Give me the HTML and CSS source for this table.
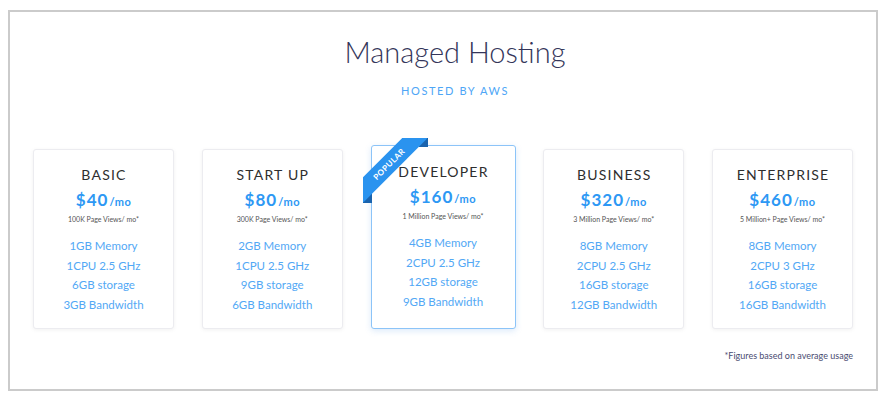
FILE: index.html
```html
<!DOCTYPE html>
<html>
<head>
<meta charset="utf-8">
<link rel="stylesheet" href="styles.css">
</head>
<body>
<div class="frame">
  <h1 class="title">Managed Hosting</h1>
  <div class="subtitle">HOSTED BY AWS</div>
  <div class="plans">
    <div class="card">
      <div class="name">BASIC</div>
      <div class="price">$40<span class="per">/mo</span></div>
      <div class="views">100K Page Views/ mo*</div>
      <ul class="features">
        <li>1GB Memory</li>
        <li>1CPU 2.5 GHz</li>
        <li>6GB storage</li>
        <li>3GB Bandwidth</li>
      </ul>
    </div>
    <div class="card">
      <div class="name">START UP</div>
      <div class="price">$80<span class="per">/mo</span></div>
      <div class="views">300K Page Views/ mo*</div>
      <ul class="features">
        <li>2GB Memory</li>
        <li>1CPU 2.5 GHz</li>
        <li>9GB storage</li>
        <li>6GB Bandwidth</li>
      </ul>
    </div>
    <div class="card card-popular">
      <div class="ribbon">
        <span class="fold fold-left"></span>
        <span class="fold fold-top"></span>
        <span class="band">POPULAR</span>
      </div>
      <div class="name">DEVELOPER</div>
      <div class="price">$160<span class="per">/mo</span></div>
      <div class="views">1 Million Page Views/ mo*</div>
      <ul class="features">
        <li>4GB Memory</li>
        <li>2CPU 2.5 GHz</li>
        <li>12GB storage</li>
        <li>9GB Bandwidth</li>
      </ul>
    </div>
    <div class="card">
      <div class="name">BUSINESS</div>
      <div class="price">$320<span class="per">/mo</span></div>
      <div class="views">3 Million Page Views/ mo*</div>
      <ul class="features">
        <li>8GB Memory</li>
        <li>2CPU 2.5 GHz</li>
        <li>16GB storage</li>
        <li>12GB Bandwidth</li>
      </ul>
    </div>
    <div class="card">
      <div class="name">ENTERPRISE</div>
      <div class="price">$460<span class="per">/mo</span></div>
      <div class="views">5 Million+ Page Views/ mo*</div>
      <ul class="features">
        <li>8GB Memory</li>
        <li>2CPU 3 GHz</li>
        <li>16GB storage</li>
        <li>16GB Bandwidth</li>
      </ul>
    </div>
  </div>
  <div class="note">*Figures based on average usage</div>
</div>
</body>
</html>
```

FILE: styles.css
```css
html, body {
  margin: 0;
  padding: 0;
  background: #ffffff;
}
body {
  padding: 10px 10px 9px 8px;
  font-family: Lato, "Open Sans", sans-serif;
}
.frame {
  box-sizing: border-box;
  width: 870px;
  height: 381px;
  border: 2px solid #cbcbcb;
  padding-top: 22px;
  display: flex;
  flex-direction: column;
  align-items: center;
}
.title {
  margin: 0;
  padding-left: 24px;
  font-size: 29px;
  line-height: 36px;
  font-weight: 300;
  color: #34365a;
}
.subtitle {
  margin-top: 14px;
  padding-left: 24px;
  font-size: 11px;
  line-height: 14px;
  letter-spacing: 1.6px;
  color: #4ea6f6;
}
.plans {
  margin-top: 47px;
  width: 820px;
  display: flex;
  justify-content: space-between;
  align-items: flex-end;
}
.card {
  box-sizing: border-box;
  position: relative;
  width: 141px;
  height: 180px;
  background: #fff;
  border: 1px solid #ececf0;
  border-radius: 3px;
  box-shadow: 0 1px 4px rgba(0, 0, 0, 0.06);
  padding-top: 16px;
  display: flex;
  flex-direction: column;
  align-items: center;
  text-align: center;
}
.card-popular {
  width: 145px;
  height: 184px;
  padding-top: 17px;
  border: 1px solid #8cc4f8;
  box-shadow: 0 2px 6px rgba(60, 140, 230, 0.18);
}
.name {
  font-size: 14px;
  line-height: 18px;
  letter-spacing: 1.2px;
  color: #2e2e2e;
  padding-left: 1px;
}
.price {
  margin-top: 5px;
  font-size: 17px;
  line-height: 22px;
  font-weight: 700;
  letter-spacing: 1px;
  color: #2d98f4;
}
.per {
  font-size: 11px;
  letter-spacing: 0.5px;
  margin-left: 1px;
}
.views {
  margin-top: 1px;
  font-size: 7px;
  line-height: 10px;
  color: #555;
}
.features {
  list-style: none;
  margin: 12px 0 0;
  padding: 0;
  font-size: 11.5px;
  line-height: 19.5px;
  color: #52a8f5;
}
.ribbon {
  position: absolute;
  left: -9px;
  top: -8px;
  width: 70px;
  height: 70px;
  overflow: hidden;
  pointer-events: none;
}
.band {
  position: absolute;
  left: -19px;
  top: 17px;
  width: 90px;
  height: 18px;
  line-height: 18px;
  background: #2a93ef;
  color: #fff;
  font-size: 8px;
  font-weight: 700;
  letter-spacing: 0.5px;
  text-align: center;
  transform: rotate(-45deg);
  z-index: 2;
}
.fold {
  position: absolute;
  width: 9px;
  height: 9px;
  background: #1a63ad;
  z-index: 1;
}
.fold-left {
  left: 0;
  top: 56px;
}
.fold-top {
  left: 56px;
  top: 0;
}
.note {
  width: 820px;
  margin-top: 21px;
  text-align: right;
  font-size: 9px;
  line-height: 11px;
  color: #4a4c72;
}
```
